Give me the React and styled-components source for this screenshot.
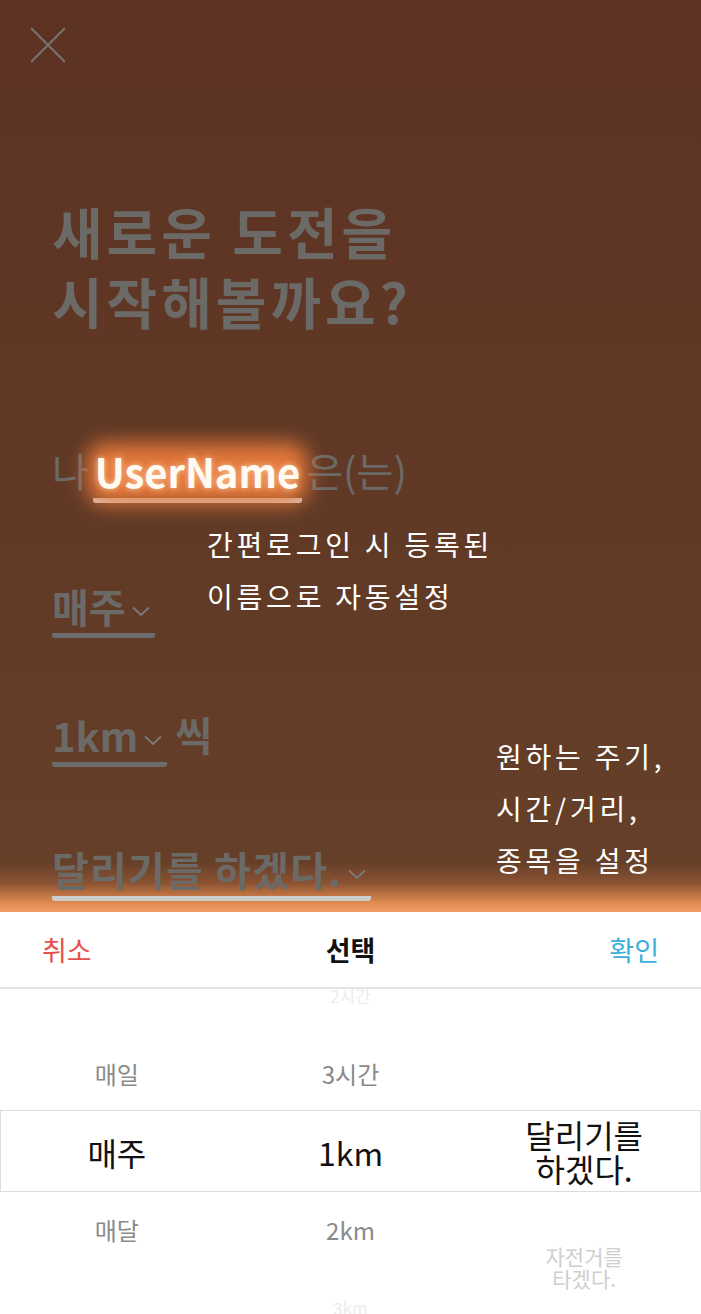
import styled, { createGlobalStyle } from "styled-components";

const GlobalStyle = createGlobalStyle`
  html, body {
    margin: 0;
    padding: 0;
    background: #ffffff;
  }
  body {
    font-family: "Noto Sans CJK KR", "Noto Sans", sans-serif;
  }
`;

const Screen = styled.div`
  width: 701px;
  height: 1314px;
  display: flex;
  flex-direction: column;
  overflow: hidden;
`;

const Dim = styled.section`
  position: relative;
  height: 912px;
  flex: none;
  box-sizing: border-box;
  padding: 27px 52px 0;
  background: linear-gradient(
    180deg,
    #5d3223 0%,
    #613a26 60%,
    #653f28 94.5%,
    #8a5232 96.8%,
    #e08a50 99%,
    #f0a066 100%
  );
`;

const CloseButton = styled.button`
  display: block;
  margin-left: -22px;
  width: 36px;
  height: 36px;
  padding: 0;
  border: 0;
  background: none;
`;

const Title = styled.h1`
  margin: 132px 0 0;
  font-size: 55px;
  font-weight: 700;
  color: #6c6a67;
  letter-spacing: 4px;
`;

const TitleLine = styled.span`
  display: block;
  height: 70px;
  line-height: 70px;
`;

const Sentence = styled.div`
  display: flex;
  align-items: flex-end;
  gap: ${(p) => p.$gap || 8}px;
  margin-top: ${(p) => p.$top}px;
  font-size: ${(p) => p.$size || 40}px;
  font-weight: 700;
  color: #6c6a67;
`;

const Plain = styled.span`
  line-height: 48px;
  padding-bottom: 9px;
  font-weight: ${(p) => (p.$light ? 400 : 700)};
`;

const Field = styled.span`
  position: relative;
  display: inline-flex;
  align-items: center;
  gap: 5px;
  line-height: 48px;
  padding: 0 4px 3px 0;
  border-bottom: 5px solid ${(p) => p.$line || "#6c6c6c"};
  border-radius: 0 0 3px 3px;
  color: ${(p) => p.$color || "inherit"};
  letter-spacing: ${(p) => p.$spacing || 0}px;
`;

const NameField = styled(Field)`
  padding: 0 2px 3px;
  &::before {
    content: "";
    position: absolute;
    inset: -4px -6px -6px -6px;
    background: #ec7c3c;
    border-radius: 18px;
    filter: blur(10px);
    opacity: 0.95;
    z-index: 0;
  }
  & > span {
    position: relative;
    z-index: 1;
    text-shadow: 0 0 6px rgba(255, 210, 170, 0.9);
  }
`;

const Chevron = styled.svg`
  width: 20px;
  height: 12px;
  margin-top: 10px;
  flex: none;
`;

const Callout = styled.p`
  position: absolute;
  left: ${(p) => p.$left}px;
  top: ${(p) => p.$top}px;
  margin: 0;
  font-size: 28px;
  line-height: 52px;
  font-weight: 400;
  color: #ffffff;
  letter-spacing: 3.8px;
  white-space: pre-line;
`;

const Sheet = styled.section`
  flex: 1;
  display: flex;
  flex-direction: column;
  background: #ffffff;
`;

const SheetHeader = styled.header`
  height: 75px;
  flex: none;
  display: flex;
  align-items: center;
  justify-content: space-between;
  padding: 0 42px;
  border-bottom: 2px solid #e4e4e4;
  font-size: 27px;
`;

const HeaderButton = styled.button`
  padding: 0;
  border: 0;
  background: none;
  font: inherit;
  color: ${(p) => p.$color};
`;

const HeaderTitle = styled.span`
  font-weight: 700;
  color: #111111;
`;

const Wheel = styled.div`
  position: relative;
  flex: 1;
  display: grid;
  grid-template-columns: 1fr 1fr 1fr;
  overflow: hidden;
`;

const SelectedBand = styled.div`
  position: absolute;
  left: 0;
  right: 0;
  top: 121px;
  height: 80px;
  border: 1px solid #dddddd;
  pointer-events: none;
`;

const Column = styled.ul`
  list-style: none;
  margin: 0;
  padding: 0;
  margin-top: ${(p) => p.$offset}px;
  display: flex;
  flex-direction: column;
  align-items: center;
`;

const tones = {
  selected: { size: 32, color: "#111111", line: 34 },
  near: { size: 24, color: "#8a8a8a", line: 28 },
  far: { size: 21, color: "#cfcfcf", line: 22 },
  edge: { size: 17, color: "#ececec", line: 18 },
};

const Item = styled.li`
  height: ${(p) => p.$height}px;
  flex: none;
  display: flex;
  align-items: center;
  justify-content: center;
  text-align: center;
  white-space: pre-line;
  font-size: ${(p) => tones[p.$tone].size}px;
  line-height: ${(p) => tones[p.$tone].line}px;
  color: ${(p) => tones[p.$tone].color};
`;

const columns = [
  {
    offset: -32,
    height: 78,
    items: [
      { label: "", tone: "near" },
      { label: "매일", tone: "near" },
      { label: "매주", tone: "selected" },
      { label: "매달", tone: "near" },
    ],
  },
  {
    offset: -32,
    height: 78,
    items: [
      { label: "2시간", tone: "edge" },
      { label: "3시간", tone: "near" },
      { label: "1km", tone: "selected" },
      { label: "2km", tone: "near" },
      { label: "3km", tone: "edge" },
    ],
  },
  {
    offset: -12,
    height: 116,
    items: [
      { label: "", tone: "near" },
      { label: "달리기를\n하겠다.", tone: "selected" },
      { label: "자전거를\n타겠다.", tone: "far" },
    ],
  },
];

function Down({ color = "#7a7a7a" }) {
  return (
    <Chevron viewBox="0 0 20 12" fill="none">
      <path d="M2 2.5 L10 10 L18 2.5" stroke={color} strokeWidth="1.8" />
    </Chevron>
  );
}

export default function App() {
  return (
    <>
      <GlobalStyle />
      <Screen>
        <Dim>
          <CloseButton aria-label="닫기">
            <svg width="36" height="36" viewBox="0 0 36 36">
              <path d="M1 1 L35 35 M35 1 L1 35" stroke="#767472" strokeWidth="2" />
            </svg>
          </CloseButton>

          <Title>
            <TitleLine>새로운 도전을</TitleLine>
            <TitleLine>시작해볼까요?</TitleLine>
          </Title>

          <Sentence $top={111} $gap={4}>
            <Plain $light>나</Plain>
            <NameField $line="#cfcfcf" $color="#fffaf2">
              <span>UserName</span>
            </NameField>
            <Plain $light>은(는)</Plain>
          </Sentence>

          <Sentence $top={79}>
            <Field>
              매주
              <Down />
            </Field>
          </Sentence>

          <Sentence $top={72}>
            <Field>
              1km
              <Down />
            </Field>
            <Plain>씩</Plain>
          </Sentence>

          <Sentence $top={78}>
            <Field $line="#cdcdcd" $spacing={1.2}>
              달리기를 하겠다.
              <Down />
            </Field>
          </Sentence>

          <Callout $left={207} $top={518}>
            {"간편로그인 시 등록된\n이름으로 자동설정"}
          </Callout>
          <Callout $left={496} $top={730}>
            {"원하는 주기,\n시간/거리,\n종목을 설정"}
          </Callout>
        </Dim>

        <Sheet>
          <SheetHeader>
            <HeaderButton $color="#e5504c">취소</HeaderButton>
            <HeaderTitle>선택</HeaderTitle>
            <HeaderButton $color="#3bafd9">확인</HeaderButton>
          </SheetHeader>
          <Wheel>
            {columns.map((col, i) => (
              <Column key={i} $offset={col.offset}>
                {col.items.map((item, j) => (
                  <Item key={j} $height={col.height} $tone={item.tone}>
                    {item.label}
                  </Item>
                ))}
              </Column>
            ))}
            <SelectedBand />
          </Wheel>
        </Sheet>
      </Screen>
    </>
  );
}
